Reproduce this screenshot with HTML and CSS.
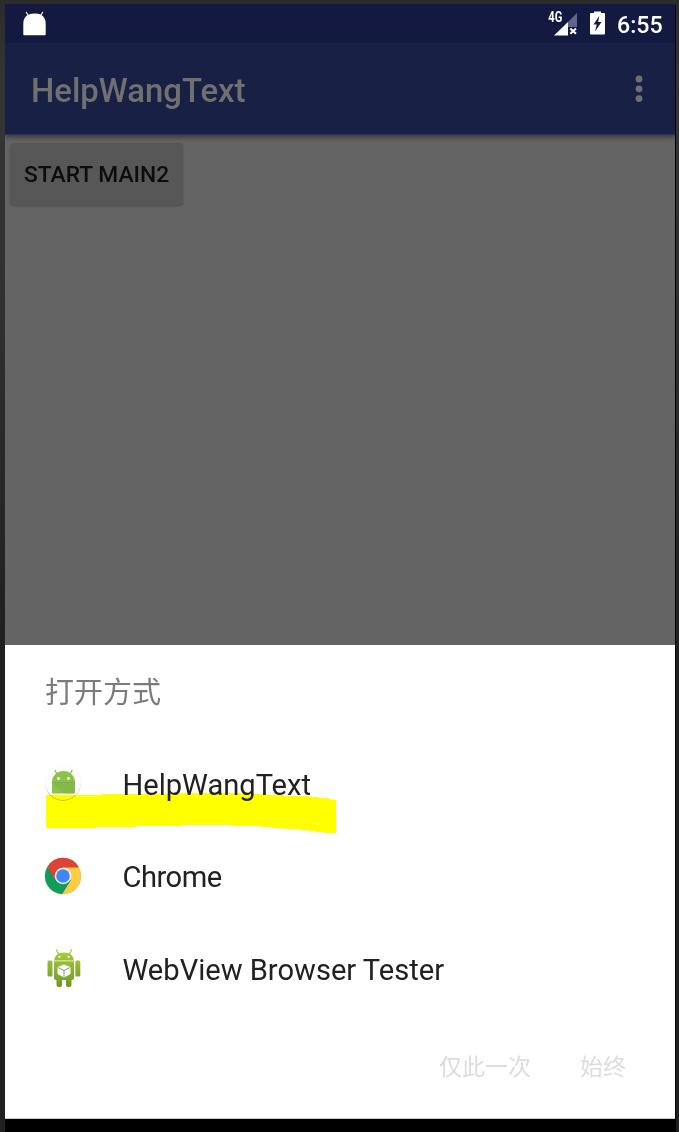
FILE: index.html
```
<!DOCTYPE html>
<html lang="zh-CN">
<head>
<meta charset="utf-8">
<title>HelpWangText</title>
<link rel="stylesheet" href="styles.css">
</head>
<body>
<div class="phone">
  <header class="status-bar">
    <svg class="droid" width="26" height="26" viewBox="0 0 26 26" fill="#fff"><path d="M1.300 23.500V13Q1.300 5.500 7 3.500Q9 2.500 12.800 2.500Q16.600 2.500 18.600 3.500Q23.700 6 23.700 13V23.500Q23.700 24.300 22.900 24.300H2.100Q1.300 24.300 1.300 23.500Z"/><path d="M6.300 4.500L4.300 1.300M18.700 4.500L20.700 1.300" stroke="#fff" stroke-width="1.200" stroke-linecap="round"/></svg>
    <div class="status-right">
      <svg class="signal" width="32" height="33" viewBox="0 -5 32 33"><path d="M29 2V16H20V11Z" fill="#62658b"/><path d="M20 11V24.500H6Z" fill="#fff"/><path d="M22.300 17.600L28 22.800M28 17.600L22.300 22.800" stroke="#fff" stroke-width="2"/><text class="network" x="0.300" y="11.300" textLength="14" lengthAdjust="spacingAndGlyphs">4G</text></svg>
      <svg class="battery" width="15" height="24" viewBox="0 0 15 24"><path d="M4 0.500H11V2H14Q15 2 15 3V22.500Q15 23.500 14 23.500H1Q0 23.500 0 22.500V3Q0 2 1 2H4Z" fill="#fff"/><path d="M9.300 5L3.500 13.500H6.800L5 20.500L11.500 11H8.200Z" fill="#141942"/></svg>
      <span class="clock">6:55</span>
    </div>
  </header>
  <div class="app-bar">
    <h1 class="app-title">HelpWangText</h1>
    <svg class="overflow" width="8" height="28" viewBox="0 0 8 28" fill="#70706c"><circle cx="4" cy="4" r="3.400"/><circle cx="4" cy="13.800" r="3.400"/><circle cx="4" cy="23.600" r="3.400"/></svg>
  </div>
  <main class="content"><button class="start">START MAIN2</button></main>
  <section class="sheet">
    <h2 class="sheet-title">打开方式</h2>
    <div class="option">
      <svg width="38" height="38" viewBox="0 0 38 38"><circle cx="19" cy="18.800" r="17.900" fill="#aaa"/><circle cx="19" cy="18" r="18" fill="#fdfdfd"/><path d="M8 18A11.500 11 0 0 1 31 18V28.500Q31 29.500 30 29.500H9Q8 29.500 8 28.500Z" fill="#8bc34a"/><path d="M13 10L11 6.500M26 10L28 6.500" stroke="#8bc34a" stroke-width="1.400" stroke-linecap="round"/><path d="M8 18.500H31V28.500Q31 29.500 30 29.500H19.500Z" fill="#79a943" opacity=".4"/><path d="M8 18.500H31" stroke="#76a63f" stroke-width=".6"/><circle cx="14.500" cy="14.500" r="1.400" fill="#fff"/><circle cx="24.500" cy="14.500" r="1.400" fill="#fff"/></svg>
      <span class="label">HelpWangText</span>
      <svg class="marker" width="290" height="42" viewBox="0 0 290 42"><path d="M0 2H56V1H110L148 0H195V1H219V2H238V3H262V4H273V5H283V6L290 7V40H278V39H270V38H262V37H254V36H238V35H226V34H214V33H186V32H150V32H136V33H90V34H50V35H0Z" fill="#ff0"/></svg>
    </div>
    <div class="option">
      <svg width="38" height="38" viewBox="0 0 38 38"><circle cx="19" cy="19.200" r="18.300" fill="#bdbdbd"/><circle cx="19" cy="19" r="18" fill="#ffcd40"/><path d="M19 19L3.400 10A18 18 0 0 0 18.300 37L27 23Z" fill="#109d59"/><path d="M3.400 10A18 18 0 0 1 35 10.500H19L11 23Z" fill="#db4437"/><circle cx="19" cy="19" r="8.300" fill="#f1f3f4"/><circle cx="19" cy="19" r="6.800" fill="#4285f4"/></svg>
      <span class="label chrome">Chrome</span>
    </div>
    <div class="option">
      <svg width="38" height="40" viewBox="0 0 38 40"><defs><linearGradient id="body" gradientUnits="userSpaceOnUse" x1="0" y1="4" x2="0" y2="39"><stop offset="0" stop-color="#a9cd3b"/><stop offset="1" stop-color="#6f9626"/></linearGradient></defs><g fill="url(#body)"><path d="M10 12.500Q11 4.500 20 4.500T30 12.500Z"/><path d="M10 13.200H30V30Q30 32 28 32H12Q10 32 10 30Z"/><rect x="3.500" y="12.500" width="5" height="16" rx="1.500"/><rect x="31.300" y="12.500" width="5" height="16" rx="1.500"/><rect x="12.500" y="29" width="5.500" height="10" rx="2"/><rect x="22" y="29" width="5.500" height="10" rx="2"/></g><path d="M14.500 6L12.500 2M25.500 6L27.500 2" stroke="#a1c935" stroke-width="1.200" stroke-linecap="round"/><circle cx="15.500" cy="8.800" r="1.100" fill="#fff"/><circle cx="24.500" cy="8.800" r="1.100" fill="#fff"/><path d="M20 16.500L26.500 19V26L20 29.500L13.500 26V19Z" fill="#fff"/><path d="M14 19.500L20 22.500L26 19.500M20 22.500V29" fill="none" stroke="#829b5b" stroke-width="1"/></svg>
      <span class="label">WebView Browser Tester</span>
    </div>
    <footer class="actions"><span>仅此一次</span><span>始终</span></footer>
  </section>
</div>
</body>
</html>
```
FILE: styles.css
```
* { box-sizing: border-box; }
body {
  margin: 0;
  height: 1132px;
  padding: 4px 4px 0 5px;
  overflow: hidden;
  background: linear-gradient(#2b2b2b 0, #363636 80px, #303030 300px, #202020 640px, #202020);
  font-family: Roboto, "Noto Sans CJK SC", sans-serif;
}
.phone { width: 670px; height: 1128px; background: #000; box-shadow: 1px 1px 0 #000; }
.status-bar {
  height: 39px;
  padding: 7px 14px 0 17px;
  display: flex;
  justify-content: space-between;
  background: #141942;
}
.droid { display: block; }
.status-right { display: flex; align-items: flex-start; color: #fff; }
.signal { margin-top: -5px; overflow: visible; }
.network { font: 700 14px Roboto, sans-serif; fill: #fff; }
.battery { margin: 0 12px 0 10px; }
.clock { width: 44px; font-size: 23.2px; font-weight: 500; line-height: 28px; white-space: nowrap; }
.app-bar {
  position: relative;
  height: 92px;
  padding: 0 32px 0 26px;
  display: flex;
  justify-content: space-between;
  align-items: center;
  background: #192046;
  border-bottom: 1px solid #28345f;
  box-shadow: 0 2px 5px rgba(0, 0, 0, .5);
  clip-path: inset(0 0 -10px 0);
}
.app-title { margin: 4px 0 0; font-size: 32.9px; font-weight: 500; line-height: 40px; color: #70706f; }
.overflow { display: block; margin-top: 1px; }
.content { height: 510px; padding: 8px 5px; background: #646464; }
.start {
  display: block;
  width: 173px;
  height: 62px;
  padding: 0;
  border: 0;
  border-radius: 4px;
  background: #575757;
  box-shadow: 0 1px 2px rgba(0, 0, 0, .25);
  font: 500 22.8px Roboto, sans-serif;
  color: #0d0d0d;
}
.sheet { height: 474px; padding: 22px 40px 0; background: #fff; border-bottom: 1px solid #c8cbc8; }
.sheet-title {
  margin: 0 0 24px;
  font: 400 29px/46px "Noto Sans CJK SC", sans-serif;
  color: #7b7b7b;
}
.option { position: relative; height: 92.5px; display: flex; align-items: center; gap: 40.5px; margin-left: -1px; }
.option > svg { flex: none; }
.label { margin-top: 3px; font-size: 29.1px; line-height: 40px; color: #212121; white-space: nowrap; }
.chrome { margin-top: 2px; letter-spacing: -.5px; }
.marker { position: absolute; left: 2px; top: 56px; mix-blend-mode: multiply; }
.actions {
  display: flex;
  justify-content: flex-end;
  gap: 49px;
  margin: 33px 9px 0 0;
  font: 400 23px/34px "Noto Sans CJK SC", sans-serif;
  color: #dcdcdc;
}
```
